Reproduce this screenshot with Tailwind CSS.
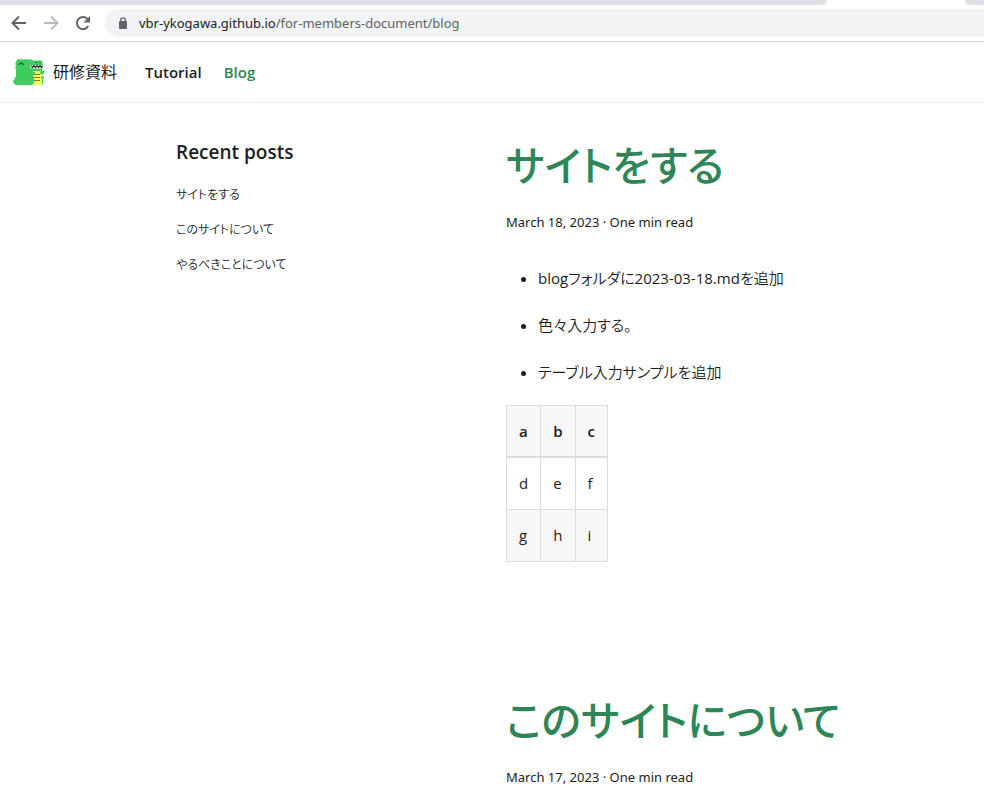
<!DOCTYPE html>
<html lang="ja">
<head>
<meta charset="utf-8">
<meta name="viewport" content="width=device-width, initial-scale=1">
<title>Blog | 研修資料</title>
<script src="https://cdn.jsdelivr.net/npm/@tailwindcss/browser@4"></script>
</head>
<body class="min-h-screen overflow-x-hidden bg-white font-['Open_Sans','Noto_Sans_CJK_JP',sans-serif] text-[15px] leading-[26px] text-[#1c1e21] [font-feature-settings:'palt']">
<div class="border-b border-[#d5d7da]">
  <div class="flex h-[5px] justify-between bg-white">
    <div class="w-[84%] rounded-br-md bg-[#dee1e6]"></div>
    <div class="w-[19px] rounded-bl-md bg-[#dee1e6]"></div>
  </div>
  <div class="flex h-9 items-center pl-[11px]">
    <button type="button" aria-label="Back" class="mr-4"><svg class="size-4" viewBox="0 0 16 16" fill="none" stroke="#5f6368" stroke-width="2"><path d="M15 8H2M8 1.5 1.5 8 8 14.5"/></svg></button>
    <button type="button" aria-label="Forward" class="mr-4"><svg class="size-4" viewBox="0 0 16 16" fill="none" stroke="#babcbe" stroke-width="2"><path d="M1 8h13M8 1.5 14.5 8 8 14.5"/></svg></button>
    <button type="button" aria-label="Reload" class="mr-[14px]"><svg class="size-4" viewBox="0 0 16 16"><path d="M13.2 11a6 6 0 1 1-1-7.2L14 5.6" fill="none" stroke="#5f6368" stroke-width="2"/><path d="M15 1v6.5H8.5z" fill="#5f6368"/></svg></button>
    <div class="flex h-7 flex-1 items-center gap-[11px] rounded-l-full bg-[#f1f3f4] pl-[13px]">
      <svg class="h-3 w-[10px] shrink-0" viewBox="0 0 10 12"><path d="M2.7 5V3.2a2.3 2.3 0 0 1 4.6 0V5" fill="none" stroke="#5f6368" stroke-width="1.3"/><rect x="1" y="4" width="8" height="8" rx="1" fill="#5f6368"/></svg>
      <div class="font-['Noto_Sans',sans-serif] text-[13px] leading-5 text-[#202124]">vbr-ykogawa.github.io<span class="text-[#5f6368]">/for-members-document/blog</span></div>
    </div>
  </div>
</div>
<nav class="flex h-[61px] items-center border-b border-[#e9e9e9] pl-[13px] font-semibold">
  <a href="#" class="mr-7 flex items-center gap-2 text-base font-normal">
    <svg class="h-8 w-8" viewBox="0 0 32 32">
      <path d="M3 6 4 4l1.500-1 1.500.700L8.500 3l1.500.700L11.500 3l1.500.700L14.500 3l1.500.700L17.500 3l1.500 1 1 .5h5L28 4.500l1.500 1V12l-1 3H30v3l-2 1v3l2 1v3l-1 3H2.500L.5 27l-.5-2.500 1.500-.500V21l1.500.500V14L2.200 12 3 10l-.8-2z" fill="#3ecc5f"/>
      <path d="M20 15h9v3l-1 1v3l1 1v4l-1 2h-8z" fill="#ffff50"/>
      <path d="M17 9h12.500v2.500l-1.500 1H19L17 11z" fill="#fff"/>
      <path d="m18 9.500 1.500 2 1.500-2 1.500 2 1.500-2 1.500 2 1.500-2 1.500 2 1-2" fill="none" stroke="#202124" stroke-width="1.100"/>
      <path d="M6 9q2.500-4.500 4.500 0" fill="none" stroke="#164b29" stroke-width="1.200"/>
      <path d="M22 6.500h2m2-.500h1.500" stroke="#238042"/>
      <path d="M19 18.500h8M19 21.500h8M20 24.500h7" stroke="#777525"/>
      <path d="M15 17q3-2 7-1v2l-2 2h-4zM15 22l6 1 1 2-2 2-5 1zM28 14.500h3.500v2L30 18h-3zM28 20.500h3v2h-3z" fill="#3ecc5f"/>
    </svg>
    研修資料
  </a>
  <a href="#" class="mr-[22px]">Tutorial</a>
  <a href="#" class="text-[#2e8555]">Blog</a>
</nav>
<div class="flex pt-8 pl-44">
  <aside class="w-[330px] shrink-0">
    <h2 class="mb-[14px] text-[19px] leading-[34px] font-semibold">Recent posts</h2>
    <ul class="flex flex-col gap-[11px] text-xs leading-6 font-[350]">
      <li><a href="#">サイトをする</a></li>
      <li><a href="#">このサイトについて</a></li>
      <li><a href="#">やるべきことについて</a></li>
    </ul>
  </aside>
  <main class="min-w-0 flex-1">
    <article class="mb-[128px]">
      <h1 class="text-[41px] leading-[60px] font-medium text-[#2e8555]"><a href="#">サイトをする</a></h1>
      <p class="mt-[15px] mb-[31px] font-['Noto_Sans',sans-serif] text-[13px] leading-6">March 18, 2023 · One min read</p>
      <ul class="mb-5 list-disc space-y-[21px] pl-8 font-[350]">
        <li><span class="font-normal">blog</span>フォルダに<span class="font-normal">2023-03-18.md</span>を追加</li>
        <li>色々入力する。</li>
        <li>テーブル入力サンプルを追加</li>
      </ul>
      <table class="border-collapse text-left">
        <thead class="border-b-2 border-[#dadde1] bg-[#f7f7f7]"><tr><th class="border border-[#dadde1] p-3 font-semibold">a</th><th class="border border-[#dadde1] p-3 font-semibold">b</th><th class="border border-[#dadde1] p-3 font-semibold">c</th></tr></thead>
        <tbody class="leading-[27px]">
          <tr><td class="border border-[#dadde1] p-3">d</td><td class="border border-[#dadde1] p-3">e</td><td class="border border-[#dadde1] p-3">f</td></tr>
          <tr class="bg-[#f7f7f7]"><td class="border border-[#dadde1] p-3">g</td><td class="border border-[#dadde1] p-3">h</td><td class="border border-[#dadde1] p-3">i</td></tr>
        </tbody>
      </table>
    </article>
    <article>
      <h1 class="text-[41px] leading-[60px] font-medium text-[#2e8555]"><a href="#">このサイトについて</a></h1>
      <p class="mt-[15px] font-['Noto_Sans',sans-serif] text-[13px] leading-6">March 17, 2023 · One min read</p>
    </article>
  </main>
</div>
</body>
</html>
